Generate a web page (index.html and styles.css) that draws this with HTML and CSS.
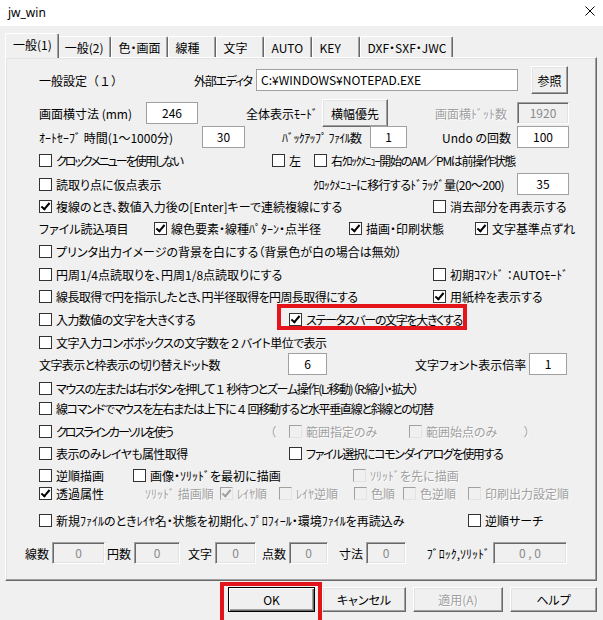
FILE: index.html
```html
<!DOCTYPE html>
<html lang="ja">
<head>
    <meta charset="UTF-8">
    <title>jw_win</title>
    <link rel="stylesheet" href="styles.css">
</head>
<body>
    <div class="titlebar">
        <span class="title">jw_win</span>
        <svg class="close" width="10" height="10" viewBox="0 0 10 10">
            <path d="M0.5 0.5 L9.5 9.5 M9.5 0.5 L0.5 9.5" stroke="#000" stroke-width="1" fill="none"/>
        </svg>
    </div>

    <div class="tabs">
        <div class="tab active">一般(1)</div>
        <div class="tab">一般(2)</div>
        <div class="tab">色・画面</div>
        <div class="tab">線種</div>
        <div class="tab">文字</div>
        <div class="tab">AUTO</div>
        <div class="tab">KEY</div>
        <div class="tab">DXF・SXF・JWC</div>
    </div>

    <div class="panel">
        <div class="row r-editor">
            <span class="full">一般設定（１）</span>
            <span class="tighter">外部エディタ</span>
            <span class="edit e-path">C:¥WINDOWS¥NOTEPAD.EXE</span>
            <span class="btn b-ref">参照</span>
        </div>
        <div class="row r-screen">
            <span>画面横寸法 (mm)</span>
            <span class="edit e52">246</span>
            <span>全体表示ﾓｰﾄﾞ</span>
            <span class="btn b-fit">横幅優先</span>
            <span class="dim">画面横ﾄﾞｯﾄ数</span>
            <span class="edit dis e52">1920</span>
        </div>
        <div class="row r-save">
            <span>ｵｰﾄｾｰﾌﾞ 時間(1〜1000分)</span>
            <span class="edit e43">30</span>
            <span class="tight">ﾊﾞｯｸｱｯﾌﾟ ﾌｧｲﾙ数</span>
            <span class="edit e37">1</span>
            <span>Undo の回数</span>
            <span class="edit e52">100</span>
        </div>
        <div class="row r-clock">
            <label class="chk tightest"><span class="cb"></span>クロックメニューを使用しない</label>
            <label class="chk"><span class="cb"></span>左</label>
            <label class="chk tighter"><span class="cb"></span>右ｸﾛｯｸﾒﾆｭｰ開始のAM／PMは前操作状態</label>
        </div>
        <div class="row r-drag">
            <label class="chk"><span class="cb"></span>読取り点に仮点表示</label>
            <span class="tight">ｸﾛｯｸﾒﾆｭｰに移行するﾄﾞﾗｯｸﾞ量(20〜200)</span>
            <span class="edit e52">35</span>
        </div>
        <div class="row r-two">
            <label class="chk"><span class="cb on"></span>複線のとき、数値入力後の[Enter]キーで連続複線にする</label>
            <label class="chk"><span class="cb"></span>消去部分を再表示する</label>
        </div>
        <div class="row r-read">
            <span>ファイル読込項目</span>
            <label class="chk"><span class="cb on"></span>線色要素・線種ﾊﾟﾀｰﾝ・点半径</label>
            <label class="chk"><span class="cb on"></span>描画・印刷状態</label>
            <label class="chk"><span class="cb on"></span>文字基準点ずれ</label>
        </div>
        <div class="row">
            <label class="chk"><span class="cb"></span>プリンタ出力イメージの背景を白にする（背景色が白の場合は無効）</label>
        </div>
        <div class="row r-two">
            <label class="chk"><span class="cb"></span>円周1/4点読取りを、円周1/8点読取りにする</label>
            <label class="chk"><span class="cb"></span>初期ｺﾏﾝﾄﾞ ：AUTOﾓｰﾄﾞ</label>
        </div>
        <div class="row r-two">
            <label class="chk tight"><span class="cb"></span>線長取得で円を指示したとき、円半径取得を円周長取得にする</label>
            <label class="chk"><span class="cb on"></span>用紙枠を表示する</label>
        </div>
        <div class="row r-mid">
            <label class="chk tight"><span class="cb"></span>入力数値の文字を大きくする</label>
            <label class="chk tighter marked"><span class="cb on"></span>ステータスバーの文字を大きくする</label>
        </div>
        <div class="row">
            <label class="chk tight"><span class="cb"></span>文字入力コンボボックスの文字数を<span class="full">２</span>バイト単位で表示</label>
        </div>
        <div class="row r-dots">
            <span class="tight">文字表示と枠表示の切り替えドット数</span>
            <span class="edit e39">6</span>
            <span>文字フォント表示倍率</span>
            <span class="edit e38">1</span>
        </div>
        <div class="row">
            <label class="chk tighter"><span class="cb"></span>マウスの左または右ボタンを押して<span class="full">１</span>秒待つとズーム操作(L:移動)（R:縮小・拡大）</label>
        </div>
        <div class="row">
            <label class="chk tighter"><span class="cb"></span>線コマンドでマウスを左右または上下に<span class="full">４</span>回移動すると水平垂直線と斜線との切替</label>
        </div>
        <div class="row r-cross">
            <label class="chk tightest"><span class="cb"></span>クロスラインカーソルを使う</label>
            <span class="dim">（</span>
            <label class="chk dis"><span class="cb"></span>範囲指定のみ</label>
            <label class="chk dis"><span class="cb"></span>範囲始点のみ</label>
            <span class="dim">）</span>
        </div>
        <div class="row r-mid">
            <label class="chk tight"><span class="cb"></span>表示のみレイヤも属性取得</label>
            <label class="chk tighter"><span class="cb"></span>ファイル選択にコモンダイアログを使用する</label>
        </div>
        <div class="row r-draw">
            <label class="chk"><span class="cb"></span>逆順描画</label>
            <label class="chk"><span class="cb"></span>画像・ｿﾘｯﾄﾞを最初に描画</label>
            <label class="chk dis"><span class="cb"></span>ｿﾘｯﾄﾞを先に描画</label>
        </div>
        <div class="row r-order">
            <label class="chk"><span class="cb on"></span>透過属性</label>
            <span class="dim">ｿﾘｯﾄﾞ 描画順</span>
            <label class="chk dis"><span class="cb on"></span>ﾚｲﾔ順</label>
            <label class="chk dis"><span class="cb"></span>ﾚｲﾔ逆順</label>
            <label class="chk dis"><span class="cb"></span>色順</label>
            <label class="chk dis"><span class="cb"></span>色逆順</label>
            <label class="chk dis"><span class="cb"></span>印刷出力設定順</label>
        </div>
        <div class="row r-new">
            <label class="chk"><span class="cb"></span>新規ﾌｧｲﾙのときﾚｲﾔ名・状態を初期化、ﾌﾟﾛﾌｨｰﾙ・環境ﾌｧｲﾙを再読込み</label>
            <label class="chk"><span class="cb"></span>逆順サーチ</label>
        </div>
        <div class="row r-count">
            <span class="lbl">線数</span><span class="edit dis">0</span>
            <span class="lbl">円数</span><span class="edit dis">0</span>
            <span class="lbl">文字</span><span class="edit dis">0</span>
            <span class="lbl">点数</span><span class="edit dis">0</span>
            <span class="lbl">寸法</span><span class="edit dis">0</span>
            <span class="lbl">ﾌﾞﾛｯｸ,ｿﾘｯﾄﾞ</span><span class="edit dis">0 , 0</span>
        </div>
    </div>

    <div class="buttons">
        <span class="btn default b-ok">OK</span>
        <span class="btn b-cancel">キャンセル</span>
        <span class="btn off b-apply">適用(A)</span>
        <span class="btn b-help">ヘルプ</span>
    </div>
</body>
</html>
```

FILE: styles.css
```css
html, body {
    margin: 0;
    height: 100%;
    overflow: hidden;
}
body {
    background-color: #f0f0f0;
    font-family: "Noto Sans CJK JP", sans-serif;
    font-size: 12px;
    color: #000;
    font-feature-settings: "palt";
}
.titlebar {
    height: 26px;
    background-color: #fff;
    display: flex;
    justify-content: space-between;
    align-items: center;
    padding: 0 8px;
}
.title {
    font-family: "Noto Sans", sans-serif;
    font-size: 12px;
    margin-top: -2px;
}
.close {
    align-self: flex-start;
    margin-top: 6px;
}

/* tabs */
.tabs {
    display: flex;
    align-items: flex-end;
    height: 31px;
    padding-left: 7px;
}
.tab {
    box-sizing: border-box;
    height: 21px;
    min-width: 48px;
    padding: 3px 6px 0 7px;
    line-height: 16px;
    white-space: nowrap;
    border-top: 1px solid #fff;
    border-left: 1px solid #fff;
    border-right: 1px solid #696969;
    border-radius: 2px 2px 0 0;
    box-shadow: inset -1px 0 #a0a0a0;
}
.tab.active {
    height: 25px;
    margin: 0 -2px -1px;
    position: relative;
    z-index: 1;
    background-color: #f0f0f0;
}

/* main panel */
.panel {
    margin-left: 5px;
    width: 592px;
    height: 524px;
    box-sizing: border-box;
    border: 1px solid;
    border-color: #fff #696969 #696969 #fff;
    box-shadow: inset -1px -1px #a0a0a0, inset 1px 1px #e3e3e3;
    padding: 8px 0 0 33px;
    display: grid;
    grid-template-rows: 33px 27px 23px 24px 22px 22px 23px 23px 22px 23px 23px 22px 24px 20px 23px 22px 22px 18px 27px 33px 22px;
    align-content: start;
}
.row {
    display: grid;
    height: 22px;
    align-items: center;
    white-space: nowrap;
}
.r-editor { grid-template-columns: 155px 62px 275px auto; }
.r-screen { grid-template-columns: 107px 100px 76px 113px 82px auto; }
.r-save   { grid-template-columns: 163px 80px 88px 72px 75px auto; }
.r-clock  { grid-template-columns: 233px 42px auto; }
.r-drag   { grid-template-columns: 274px 204px auto; }
.r-two    { grid-template-columns: 394px auto; }
.r-read   { grid-template-columns: 115px 195px 126px auto; }
.r-mid    { grid-template-columns: 250px auto; }
.r-dots   { grid-template-columns: 249px 127px 114px auto; }
.r-cross  { grid-template-columns: 231px 19px 120px 115px auto; }
.r-draw   { grid-template-columns: 94px 220px auto; }
.r-order  { grid-template-columns: 106px 75px 59px 75px 49px 65px auto; }
.r-new    { grid-template-columns: 429px auto; }
.r-count {
    margin-left: -17px;
    grid-template-columns: 30px 53px 29px 46px 35px 41px 33px 39px 38px 40px 87px 74px;
}
.r-count .lbl {
    text-align: right;
    padding-right: 3px;
}

/* the dialog font has narrower kana than Noto, so kana-heavy labels are tightened */
.tight { letter-spacing: -0.6px; }
.tighter { letter-spacing: -1.3px; }
.tightest { letter-spacing: -2px; }
/* full-width digits and brackets keep their full em */
.full {
    font-feature-settings: normal;
    letter-spacing: 0;
}

.dim {
    color: #a0a0a0;
    text-shadow: 1px 1px 0 #fff;
}

/* checkboxes */
.chk {
    display: flex;
    align-items: center;
    height: 22px;
}
.cb {
    position: relative;
    flex: none;
    box-sizing: border-box;
    width: 13px;
    height: 13px;
    margin-right: 4px;
    border: 1px solid #333;
    background-color: #fff;
}
.cb.on::after {
    content: "";
    position: absolute;
    left: 3px;
    top: 0;
    width: 3px;
    height: 7px;
    border: solid #000;
    border-width: 0 2px 2px 0;
    transform: rotate(40deg);
}
.chk.dis {
    color: #a0a0a0;
    text-shadow: 1px 1px 0 #fff;
}
.chk.dis .cb {
    border-color: #a0a0a0 #e3e3e3 #e3e3e3 #a0a0a0;
    background-color: #f0f0f0;
}
.chk.dis .cb.on::after {
    border-color: #a0a0a0;
}
.marked {
    position: relative;
}
.marked::before {
    content: "";
    position: absolute;
    left: -12px;
    top: -4px;
    width: 190px;
    height: 26px;
    box-sizing: border-box;
    border: 4px solid #e5141b;
}

/* edit boxes */
.edit {
    box-sizing: border-box;
    height: 22px;
    line-height: 20px;
    border: 1px solid #a0a0a0;
    background-color: #fff;
    text-align: center;
    overflow: hidden;
}
.edit.dis {
    background-color: #f0f0f0;
    color: #8a8a8a;
    border-color: #a0a0a0 #fff #fff #a0a0a0;
    box-shadow: inset 1px 1px #696969, inset -1px -1px #e3e3e3;
}
.e-path {
    width: 262px;
    text-align: left;
    padding-left: 4px;
}
.e52 { width: 52px; }
.e43 { width: 43px; }
.e39 { width: 39px; }
.e38 { width: 38px; }
.e37 { width: 37px; }

/* buttons */
.btn {
    box-sizing: border-box;
    display: flex;
    justify-content: center;
    align-items: center;
    height: 28px;
    background-color: #f0f0f0;
    border: 1px solid;
    border-color: #fff #696969 #696969 #fff;
    box-shadow: inset -1px -1px #a0a0a0, inset 1px 1px #e3e3e3;
}
.b-ref { width: 37px; }
.b-fit { width: 66px; }
.buttons {
    display: flex;
    gap: 7px;
    margin-top: 6px;
    padding-left: 228px;
}
.buttons .btn { height: 25px; }
.btn.default {
    position: relative;
    border-color: #000;
    box-shadow: inset 1px 1px #fff, inset -1px -1px #696969, inset -2px -2px #a0a0a0;
}
.btn.default::before {
    content: "";
    position: absolute;
    left: -9px;
    top: -6px;
    width: 102px;
    height: 46px;
    box-sizing: border-box;
    border: 4px solid #e5141b;
}
.btn.off {
    color: #a0a0a0;
    text-shadow: 1px 1px 0 #fff;
}
.b-ok { width: 87px; }
.b-cancel { width: 84px; }
.b-apply { width: 90px; }
.b-help { width: 87px; }
```
